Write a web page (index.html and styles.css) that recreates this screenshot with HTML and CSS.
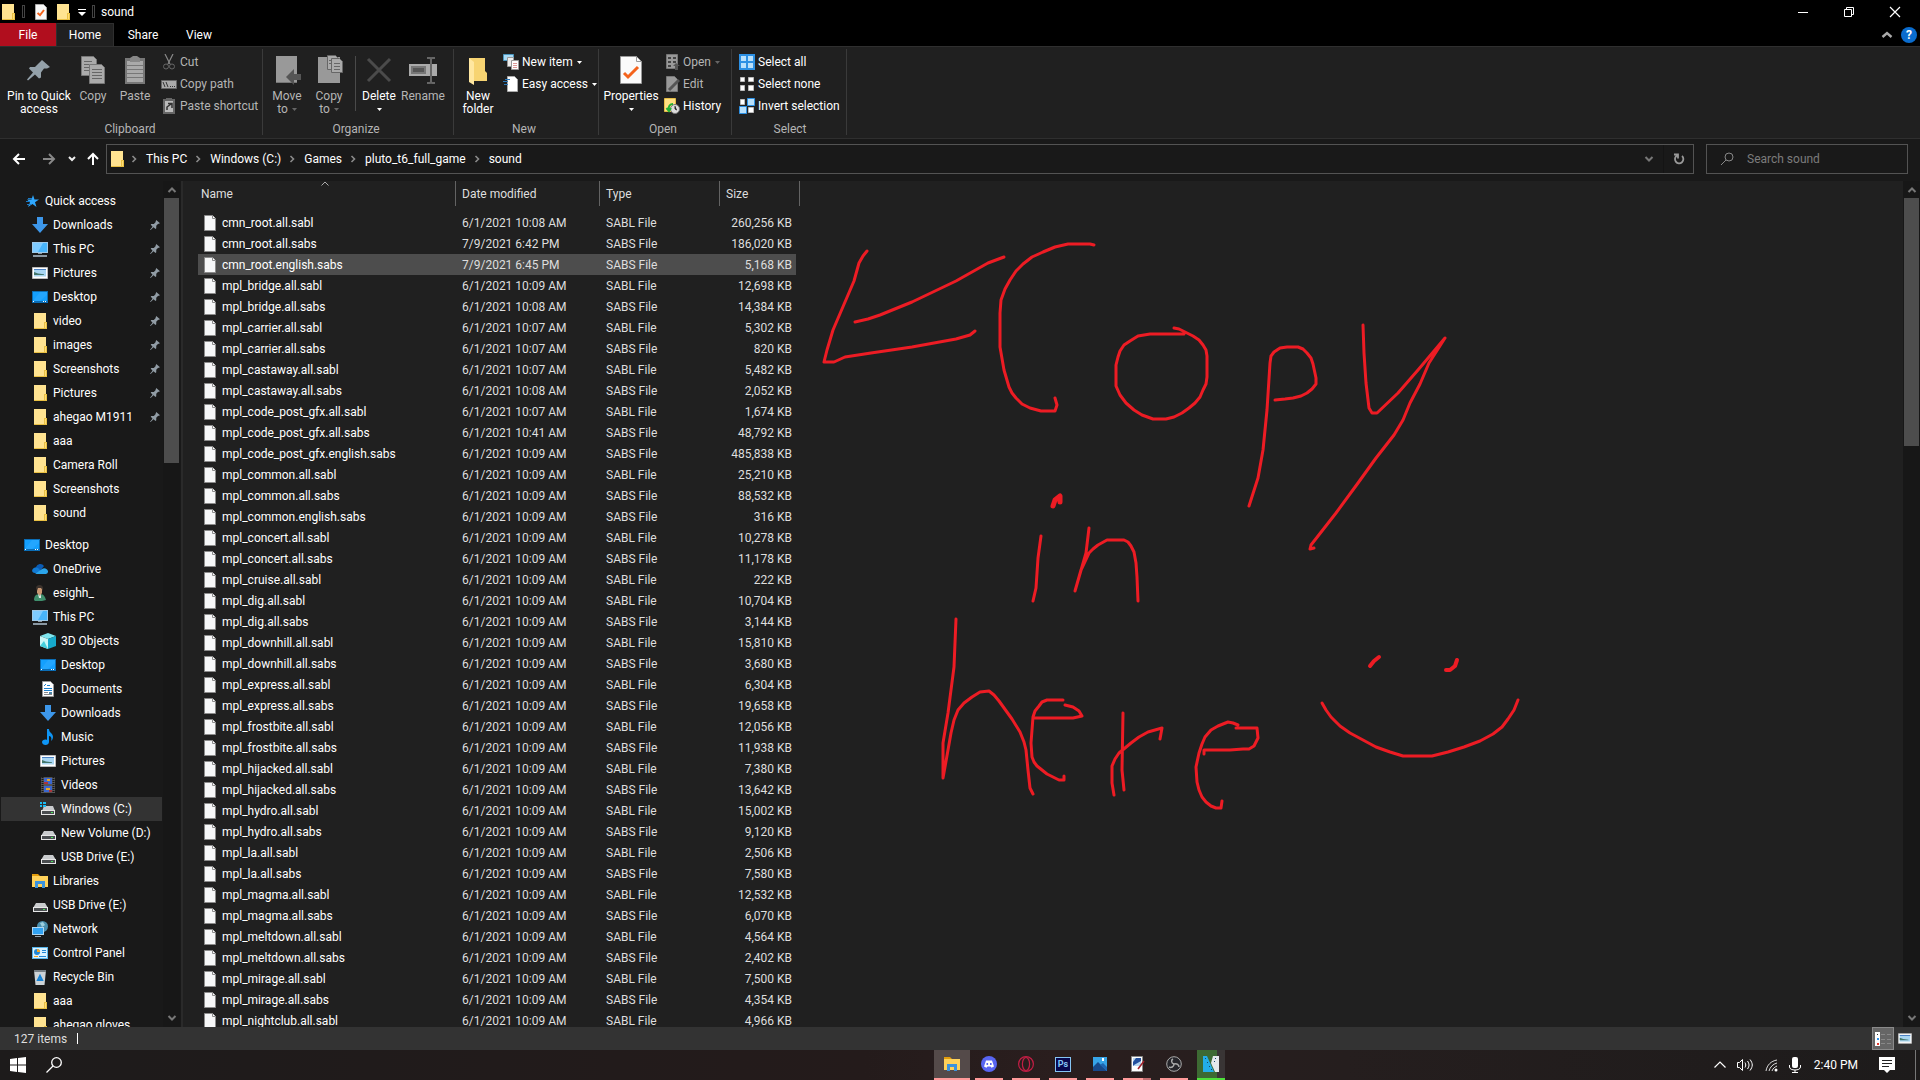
FILE: index.html
```html
<!DOCTYPE html>
<html lang="en">
<head>
  <meta charset="UTF-8">
  <meta name="viewport" content="width=device-width, initial-scale=1.0">
  <title>sound</title>
  <link rel="stylesheet" href="styles.css">
</head>
<body>
  <!-- icons -->
  <svg class="sprite" aria-hidden="true">
    <symbol id="folder" viewBox="0 0 16 16"><path fill="#ffe391" d="M2 0h12v15H2z"/><path fill="#e9c043" d="M2 15h12v1H2zM12 9h3v7h-3z"/><path fill="#ffdc76" d="M13 10h1v5h-1z"/></symbol>
    <symbol id="file" viewBox="0 0 12 16"><path fill="#f6f7f8" stroke="#8b8b8b" d="M.5.5h8l3 3v12H.5z"/><path fill="#fff" stroke="#8b8b8b" d="M8.500.5v3h3"/></symbol>
    <symbol id="prop" viewBox="0 0 12 16"><path fill="#f8f8f8" stroke="#aaa" d="M.5.5h8l3 3v12H.5z"/><path fill="none" stroke="#f4631c" stroke-width="2" d="M2.500 9l2.500 2 4-5"/></symbol>
    <symbol id="pin" viewBox="0 0 12 12"><path fill="#919ca5" d="M7.500 0L12 4l-1.500.6-1 .2-2 2.200v3l-.8.8-2.500-2.200L.8 12l-.8-.3 3-3.500L.8 5.500l.8-.8h3l2-2 .2-1z"/></symbol>
    <symbol id="star" viewBox="0 0 16 16"><path fill="#2fa8ff" d="M9 2l1.500 4.500H15l-4 2.800L12.500 14 8.500 11 4 14l2-4.500L3 6.500h4.500z"/><path stroke="#1c7bc8" d="M4 5.500h4M2 8.500h4M3 11.500h4"/></symbol>
    <symbol id="down" viewBox="0 0 16 16"><path fill="#3d97ea" d="M5 0h6v7h5l-8 9-8-9h5z"/></symbol>
    <symbol id="pc" viewBox="0 0 16 16"><path fill="#9fc9e8" d="M0 1h16v11H0z"/><path fill="#48b4fa" d="M1 2h14v9H1z"/><path fill="#7ecbff" d="M1 2h10L6 11H1z"/><path fill="#8a98a3" d="M6 12h4v1H6zM1 14h14v2H1z"/></symbol>
    <symbol id="pic" viewBox="0 0 16 16"><path fill="#fff" stroke="#bbb" d="M.5 2.500h15v11H.5z"/><path fill="#a9d6f3" d="M2 4h12v8H2z"/><path fill="#4d83c4" d="M2 4h12v1H2z"/><path fill="#44776b" d="M2 7l4 1.500 6 .8V10H2z"/><path fill="#d5e8f1" d="M2 11h12v1H2z"/></symbol>
    <symbol id="desk" viewBox="0 0 16 16"><path fill="#0b6db5" d="M0 2h16v12H0z"/><path fill="#14a0ff" d="M1 3h14v9H1z"/><path fill="#40b2ff" d="M8 3h7v3l-7 6H1z" opacity=".35"/><path fill="#fff" d="M1 12h1v1H1zM11 12h1v1h-1zM13 12h1v1h-1z"/></symbol>
    <symbol id="cloud" viewBox="0 0 16 16"><path fill="#0a5cb5" d="M4 6a4.500 4.500 0 0 1 8-1l-4 5H1z"/><path fill="#1179d2" d="M0 10a4 4 0 0 1 6-3l5 5H3a3 3 0 0 1-3-2z"/><path fill="#2ba5ea" d="M3 13l7-5a4 4 0 0 1 6 2 2.800 2.800 0 0 1-2 3z"/></symbol>
    <symbol id="user" viewBox="0 0 16 16"><path fill="#3f8f6d" d="M2 15c0-4 2-6 6-6s5 3 6 6l-4 1H3z"/><path fill="#c99873" d="M5 3h5v5l-2 3-3-3z"/><path fill="#3c332d" d="M4 3c0-4 7-4 7 0v3L9 3H6L5 6z"/><path fill="#dfe8e4" d="M6 9l2 2 1-2v4H7z"/></symbol>
    <symbol id="cube" viewBox="0 0 16 16"><path fill="#7fe6ee" d="M8 0l8 3-8 3-8-3z"/><path fill="#c9f6f6" d="M0 3l8 3v10l-8-3z"/><path fill="#16a9cb" d="M16 3L8 6v10l8-3z"/><path fill="#45cfdc" d="M0 13l4-5 4 8z"/></symbol>
    <symbol id="doc" viewBox="0 0 16 16"><path fill="#fff" stroke="#999" d="M2.500.5h8l3 3v12h-11z"/><path stroke="#1e80cc" d="M4 7.500h8M4 9.500h8M7 4.500h3M4 5l2-2"/><path stroke="#888" d="M4 11.500h4M4 13.500h8"/><path fill="#4d86a8" d="M9 11h3v2H9z"/></symbol>
    <symbol id="music" viewBox="0 0 16 16"><path fill="#0e95f5" d="M7 0h2c0 4 4 4 4 8 0 2-1 3-2 4 1-3 0-5-2-5v6c0 4-7 4-7 0 0-2 3-3 5-2z"/></symbol>
    <symbol id="video" viewBox="0 0 16 16"><path fill="#555" d="M1 0h14v16H1z"/><path stroke="#161616" stroke-width="2" stroke-dasharray="1 1" d="M2.500 0v16M13.500 0v16"/><path fill="#3a66cf" d="M4 1h8v6H4zM4 9h8v6H4z"/><path fill="#e2a62c" d="M7 2h3v2H7zM6 11h4v2H6z"/><path fill="#a9343b" d="M4 5h4v2H4zM9 13h3v2H9z"/></symbol>
    <symbol id="drive" viewBox="0 0 16 16"><path fill="#c9cbcd" d="M4 6h9l3 5H1z"/><path fill="#e7e7e7" d="M1 10h15v5H1z"/><path fill="#4a4d50" d="M2 11h13v3H2z"/><path fill="#4be25a" d="M11 12h2v1h-2z"/></symbol>
    <symbol id="cdrive" viewBox="0 0 16 16"><path fill="#c9cbcd" d="M4 5h9l2 5H2z"/><path fill="#e7e7e7" d="M1 9h14v5H1z"/><path fill="#4a4d50" d="M2 10h12v3H2z"/><path fill="#4be25a" d="M11 11h2v1h-2z"/><path fill="#1bbcf2" d="M0 1h2v2H0zM3 1h3v2H3zM0 4h2v2H0zM3 4h3v2H3z"/></symbol>
    <symbol id="lib" viewBox="0 0 16 16"><path fill="#e29c0c" d="M0 1h6l2 2H0z"/><path fill="#ffd25a" d="M0 3h16v11H0z"/><path fill="#3c93dd" d="M3 8h10v7h-3v-4H6v4H3z"/></symbol>
    <symbol id="net" viewBox="0 0 16 16"><circle cx="10.500" cy="5.500" r="5.500" fill="#4a8fae"/><path fill="#9dd0df" d="M8 2l3-1 2 3-3 2z"/><path fill="#afd6f0" d="M0 6h12v8H0z"/><path fill="#31a2f2" d="M1 7h10v6H1z"/><path fill="#93a2ad" d="M3 15h6v1H3z"/></symbol>
    <symbol id="ctrl" viewBox="0 0 16 16"><path fill="#58b5ea" d="M0 2h16v12H0z"/><path fill="#d9f1ff" d="M1 3h14v10H1z"/><circle cx="5" cy="7" r="3" fill="#2187d5"/><path fill="#f5a623" d="M5 4a3 3 0 0 1 3 3H5zM2 11h4v1H2z"/><path stroke="#2187d5" d="M10 5.500h4M10 7.500h4M7 11.500h7"/></symbol>
    <symbol id="bin" viewBox="0 0 16 16"><path fill="#cdd3d7" d="M2 1h12l-1.500 15h-9z"/><path fill="#777f85" d="M2 1h12v2H2z"/><path fill="none" stroke="#1683d6" stroke-width="2" d="M6 11l2-4 2 4z"/></symbol>
    <symbol id="chev" viewBox="0 0 8 8"><path fill="none" stroke="#8a8a8a" stroke-width="1.600" d="M2.500 1l3 3-3 3"/></symbol>
    <symbol id="up" viewBox="0 0 10 10"><path fill="none" stroke="#777" stroke-width="2" d="M1.500 7L5 3.500 8.500 7"/></symbol>
    <symbol id="dn" viewBox="0 0 10 10"><path fill="none" stroke="#777" stroke-width="2" d="M1.500 3L5 6.500 8.500 3"/></symbol>
    <symbol id="tri" viewBox="0 0 5 3"><path fill="currentColor" d="M0 0h5L2.500 3z"/></symbol>
  </svg>

  <div class="window">
    <header class="titlebar">
      <svg class="i16"><use href="#folder"/></svg>
      <span class="grip"></span>
      <button class="quick" aria-label="Properties"><svg class="i-file"><use href="#prop"/></svg></button>
      <button class="quick" aria-label="New folder"><svg class="i16"><use href="#folder"/></svg></button>
      <button class="quick-more" aria-label="Customize toolbar"><svg width="8" height="8"><path fill="#fff" d="M0 1h8v1H0zM0 4h8L4 8z"/></svg></button>
      <span class="grip"></span>
      <span class="title">sound</span>
      <div class="controls">
        <button aria-label="Minimize"><svg width="12" height="12"><path stroke="#fff" d="M1 6.500h10"/></svg></button>
        <button aria-label="Restore"><svg width="12" height="12"><path fill="none" stroke="#fff" d="M1.500 3.500h7v7h-7zM3.500 3V1.500h7v7H9"/></svg></button>
        <button aria-label="Close"><svg width="12" height="12"><path stroke="#fff" stroke-width="1.200" d="M1 1l10 10M11 1L1 11"/></svg></button>
      </div>
    </header>

    <nav class="tabs">
      <button class="tab tab-file">File</button>
      <button class="tab tab-active">Home</button>
      <button class="tab">Share</button>
      <button class="tab tab-view">View</button>
      <div class="tab-tools">
        <button aria-label="Collapse ribbon"><svg width="12" height="12"><path fill="none" stroke="#aaa" stroke-width="2.400" d="M1.500 8L6 4l4.500 4"/></svg></button>
        <button class="help" aria-label="Help">?</button>
      </div>
    </nav>

    <section class="ribbon">
      <div class="group g-clipboard">
        <div class="group-body">
          <button class="big w74"><svg width="24" height="30" viewBox="0 0 24 30"><path fill="#94a1aa" d="M15 5l8 7-3 1.500h-3l-3 4v5l-2 1-4-4-7 6-1-1 6-7-4-4 1-1.500h5l4-4z"/></svg><span>Pin to Quick<br>access</span></button>
          <button class="big w34" disabled><svg width="26" height="30" viewBox="0 0 26 30"><g fill="#aaa" stroke="#777"><path d="M1.500 1.500h12l3 3v16h-15z"/><path d="M9.500 9.500h12l3 3v16h-15z"/></g><path stroke="#666" d="M4 6.500h8M4 9.500h5M4 12.500h5M4 15.500h5M12 14.500h10M12 17.500h10M12 20.500h10M12 23.500h10"/></svg><span>Copy</span></button>
          <button class="big w50" disabled><svg width="24" height="30" viewBox="0 0 24 30"><path fill="#777" d="M2 3h20v26H2z"/><path fill="#aaa" d="M4 6h16v21H4z"/><path fill="#888" d="M7 3l3-2h4l3 2v4H7z"/><path stroke="#777" d="M4 10.500h16M4 14.500h16M4 18.500h16M4 22.500h16"/></svg><span>Paste</span></button>
          <div class="stack">
            <button class="small" disabled><svg class="i16"><path fill="none" stroke="#888" stroke-width="1.200" d="M4 0l5 10M12 0L7 10"/><circle cx="5" cy="12.500" r="2.500" fill="none" stroke="#666"/><circle cx="11" cy="12.500" r="2.500" fill="none" stroke="#666"/></svg>Cut</button>
            <button class="small" disabled><svg class="i16"><path fill="#aaa" stroke="#666" d="M.5 4.500h15v8H.5z"/><path stroke="#333" d="M2 6l2 5M5 6l2 5M9 10.500h1M11 10.500h1M13 10.500h1"/></svg>Copy path</button>
            <button class="small" disabled><svg class="i16"><path fill="#666" d="M2 1h12v15H2zM5 0h6v2H5z"/><path fill="#bbb" d="M4 3h8v11H4z"/><path fill="none" stroke="#333" stroke-width="1.500" d="M6 12V9l4-3M7 5.500h4V10"/></svg>Paste shortcut</button>
          </div>
        </div>
        <div class="group-name">Clipboard</div>
      </div>
      <div class="group g-organize">
        <div class="group-body">
          <button class="big w48" disabled><svg width="28" height="30" viewBox="0 0 28 30"><path fill="#999" d="M3 1h21v27H3z"/><path fill="#777" d="M3 27h21v1H3z"/><path fill="#555" d="M13 22l8-8v5h7v6h-7v5z"/></svg><span>Move<br>to <svg class="tri"><use href="#tri"/></svg></span></button>
          <button class="big w36" disabled><svg width="28" height="30" viewBox="0 0 28 30"><path fill="#999" d="M3 2h22v26H3z"/><g fill="#aaa" stroke="#666"><path d="M12.500.5h8l2 2v12h-10z"/><path d="M16.500 3.500h8l3 3v11h-11z"/></g><path stroke="#666" d="M19 8.500h6M19 11.500h6M19 14.500h6M14 5.500h2M14 8.500h2"/></svg><span>Copy<br>to <svg class="tri"><use href="#tri"/></svg></span></button>
          <span class="inner-line"></span>
          <button class="big w46"><svg width="26" height="30" viewBox="0 0 26 30"><path stroke="#4b4b4b" stroke-width="3" d="M2 4l22 22M24 4L2 26"/></svg><span>Delete<br><svg class="tri"><use href="#tri"/></svg></span></button>
          <button class="big w42" disabled><svg width="28" height="30" viewBox="0 0 28 30"><path fill="#aaa" d="M0 9h28v12H0z"/><path fill="#555" stroke="#777" stroke-width="2" d="M3 12h13v6H3z"/><path fill="none" stroke="#666" stroke-width="2" d="M18 3h3l1 1 1-1h3M22 4v23M18 28h3l1-1 1 1h3"/></svg><span>Rename</span></button>
        </div>
        <div class="group-name">Organize</div>
      </div>
      <div class="group g-new">
        <div class="group-body">
          <button class="big w48"><svg width="20" height="30" viewBox="0 0 20 30"><path fill="#f7d472" d="M1 3h16v13l2 2v8H4z"/><path fill="#ffe7a0" d="M1 3l5 4v23l-5-3z"/></svg><span>New<br>folder</span></button>
          <div class="stack">
            <button class="small"><svg class="i16"><path fill="#a9daf5" stroke="#4b95bd" d="M.5.5h10v6H.5z"/><path fill="#eee" stroke="#999" d="M4.500 3.500h6v9h-6z"/><path fill="#fff" stroke="#999" d="M8.500 6.500h7v9h-7z"/><path stroke="#d99" d="M10 9.500h4M10 11.500h4M10 13.500h4"/></svg>New item<svg class="tri"><use href="#tri"/></svg></button>
            <button class="small"><svg class="i16"><path fill="#fff" stroke="#aaa" d="M4.500.5h7l3 3v12h-10z"/><path stroke="#2b78b8" d="M2 3.500h5M0 5.500h5M1 8.500h4"/></svg>Easy access<svg class="tri"><use href="#tri"/></svg></button>
          </div>
        </div>
        <div class="group-name">New</div>
      </div>
      <div class="group g-open">
        <div class="group-body">
          <button class="big w64"><svg width="22" height="30" viewBox="0 0 22 30"><path fill="#fafafa" stroke="#999" d="M.5 1.500h16l5 5v22H.5z"/><path fill="none" stroke="#999" d="M16.500 1.500v5h5"/><path fill="none" stroke="#f4631c" stroke-width="3" d="M4 18l4 4 10-10"/></svg><span>Properties<br><svg class="tri"><use href="#tri"/></svg></span></button>
          <div class="stack">
            <button class="small" disabled><svg class="i16"><path fill="#999" stroke="#777" d="M2.500.5h11v14h-11z"/><path stroke="#444" stroke-width="2" d="M4 4h3M4 8h3M4 12h3M9 4h3M9 8h3"/><path fill="#555" d="M9 12l3-3 4 3h-2v4h-3v-4z"/></svg>Open<svg class="tri"><use href="#tri"/></svg></button>
            <button class="small" disabled><svg class="i16"><path fill="#999" stroke="#777" d="M2.500.5h8l3 3v12h-11z"/><path stroke="#555" stroke-width="3" d="M5 14L15 4"/></svg>Edit</button>
            <button class="small"><svg class="i16"><path fill="#ffe082" stroke="#e5bd45" d="M.5.5h11v13H.5z"/><circle cx="11" cy="11" r="4.500" fill="#ddd" stroke="#777"/><path stroke="#333" d="M11 8v3l2 1"/><path fill="none" stroke="#22b033" stroke-width="2" d="M9 6c-3 0-5 2-4 6M2.500 10L5 13l2-3"/></svg>History</button>
          </div>
        </div>
        <div class="group-name">Open</div>
      </div>
      <div class="group g-select">
        <div class="group-body">
          <div class="stack">
            <button class="small"><svg class="i16"><path fill="#2c90e4" d="M0 0h16v16H0z"/><path fill="#b9e0fb" d="M2 2h5v5H2zM9 2h5v5H9zM2 9h5v5H2zM9 9h5v5H9z"/></svg>Select all</button>
            <button class="small"><svg class="i16"><path fill="#fff" stroke="#bbb" d="M1.500 1.500h4v4h-4zM9.500 1.500h5v4h-5zM1.500 9.500h4v5h-4zM9.500 9.500h5v5h-5z"/></svg>Select none</button>
            <button class="small"><svg class="i16"><path fill="#fff" stroke="#bbb" d="M1.500 1.500h4v5h-4zM9.500 9.500h5v5h-5z"/><path fill="#b9e0fb" stroke="#2c90e4" d="M8.500.5h7v7h-7zM.5 8.500h7v7h-7z"/></svg>Invert selection</button>
          </div>
        </div>
        <div class="group-name">Select</div>
      </div>
    </section>

    <section class="addressbar">
      <button class="nav-btn" aria-label="Back"><svg width="14" height="14"><path fill="none" stroke="#fff" stroke-width="2" d="M13 7H2M7 2L2 7l5 5"/></svg></button>
      <button class="nav-btn" aria-label="Forward"><svg width="14" height="14"><path fill="none" stroke="#888" stroke-width="2" d="M1 7h11M7 2l5 5-5 5"/></svg></button>
      <button class="nav-btn nav-small" aria-label="Recent locations"><svg width="8" height="8"><path fill="none" stroke="#eee" stroke-width="2" d="M1 2l3 3 3-3"/></svg></button>
      <button class="nav-btn nav-up" aria-label="Up"><svg width="14" height="14"><path fill="none" stroke="#fff" stroke-width="2" d="M7 13V2M2 7l5-5 5 5"/></svg></button>
      <div class="path">
        <svg class="i16 path-icon"><use href="#folder"/></svg>
        <svg class="chev"><use href="#chev"/></svg><a href="#">This PC</a>
        <svg class="chev"><use href="#chev"/></svg><a href="#">Windows (C:)</a>
        <svg class="chev"><use href="#chev"/></svg><a href="#">Games</a>
        <svg class="chev"><use href="#chev"/></svg><a href="#">pluto_t6_full_game</a>
        <svg class="chev"><use href="#chev"/></svg><a href="#">sound</a>
        <button class="path-drop" aria-label="Previous locations"><svg class="i10"><use href="#dn"/></svg></button>
        <button class="path-refresh" aria-label="Refresh"><svg width="12" height="12"><path fill="none" stroke="#999" stroke-width="1.800" d="M4 2.500a4.200 4.200 0 1 0 5 .5M1 1.500h4v4"/></svg></button>
      </div>
      <label class="search">
        <svg width="14" height="14"><circle cx="9" cy="5" r="4" fill="none" stroke="#888"/><path stroke="#888" d="M6 8l-5 5"/></svg>
        <input type="text" placeholder="Search sound" aria-label="Search sound">
      </label>
    </section>

    <main class="content">
      <aside class="sidebar">
        <ul class="tree">
          <li><svg class="i16"><use href="#star"/></svg>Quick access</li>
          <li class="l2"><svg class="i16"><use href="#down"/></svg>Downloads<svg class="pin"><use href="#pin"/></svg></li>
          <li class="l2"><svg class="i16"><use href="#pc"/></svg>This PC<svg class="pin"><use href="#pin"/></svg></li>
          <li class="l2"><svg class="i16"><use href="#pic"/></svg>Pictures<svg class="pin"><use href="#pin"/></svg></li>
          <li class="l2"><svg class="i16"><use href="#desk"/></svg>Desktop<svg class="pin"><use href="#pin"/></svg></li>
          <li class="l2"><svg class="i16"><use href="#folder"/></svg>video<svg class="pin"><use href="#pin"/></svg></li>
          <li class="l2"><svg class="i16"><use href="#folder"/></svg>images<svg class="pin"><use href="#pin"/></svg></li>
          <li class="l2"><svg class="i16"><use href="#folder"/></svg>Screenshots<svg class="pin"><use href="#pin"/></svg></li>
          <li class="l2"><svg class="i16"><use href="#folder"/></svg>Pictures<svg class="pin"><use href="#pin"/></svg></li>
          <li class="l2"><svg class="i16"><use href="#folder"/></svg>ahegao M1911<svg class="pin"><use href="#pin"/></svg></li>
          <li class="l2"><svg class="i16"><use href="#folder"/></svg>aaa</li>
          <li class="l2"><svg class="i16"><use href="#folder"/></svg>Camera Roll</li>
          <li class="l2"><svg class="i16"><use href="#folder"/></svg>Screenshots</li>
          <li class="l2"><svg class="i16"><use href="#folder"/></svg>sound</li>
        </ul>
        <ul class="tree">
          <li><svg class="i16"><use href="#desk"/></svg>Desktop</li>
          <li class="l2"><svg class="i16"><use href="#cloud"/></svg>OneDrive</li>
          <li class="l2"><svg class="i16"><use href="#user"/></svg>esighh_</li>
          <li class="l2"><svg class="i16"><use href="#pc"/></svg>This PC</li>
          <li class="l3"><svg class="i16"><use href="#cube"/></svg>3D Objects</li>
          <li class="l3"><svg class="i16"><use href="#desk"/></svg>Desktop</li>
          <li class="l3"><svg class="i16"><use href="#doc"/></svg>Documents</li>
          <li class="l3"><svg class="i16"><use href="#down"/></svg>Downloads</li>
          <li class="l3"><svg class="i16"><use href="#music"/></svg>Music</li>
          <li class="l3"><svg class="i16"><use href="#pic"/></svg>Pictures</li>
          <li class="l3"><svg class="i16"><use href="#video"/></svg>Videos</li>
          <li class="l3 selected"><svg class="i16"><use href="#cdrive"/></svg>Windows (C:)</li>
          <li class="l3"><svg class="i16"><use href="#drive"/></svg>New Volume (D:)</li>
          <li class="l3"><svg class="i16"><use href="#drive"/></svg>USB Drive (E:)</li>
          <li class="l2"><svg class="i16"><use href="#lib"/></svg>Libraries</li>
          <li class="l2"><svg class="i16"><use href="#drive"/></svg>USB Drive (E:)</li>
          <li class="l2"><svg class="i16"><use href="#net"/></svg>Network</li>
          <li class="l2"><svg class="i16"><use href="#ctrl"/></svg>Control Panel</li>
          <li class="l2"><svg class="i16"><use href="#bin"/></svg>Recycle Bin</li>
          <li class="l2"><svg class="i16"><use href="#folder"/></svg>aaa</li>
          <li class="l2"><svg class="i16"><use href="#folder"/></svg>ahegao gloves</li>
        </ul>
      </aside>
      <div class="scroll">
        <svg class="i10"><use href="#up"/></svg>
        <div class="thumb thumb-tree"></div>
        <svg class="i10 scroll-end"><use href="#dn"/></svg>
      </div>

      <div class="files">
        <table>
          <thead>
            <tr><th class="c-name">Name<svg class="sort" width="8" height="5"><path fill="none" stroke="#aaa" d="M.5 4.500L4 1l3.500 3.500"/></svg></th><th class="c-date">Date modified</th><th class="c-type">Type</th><th class="c-size">Size</th></tr>
          </thead>
          <tbody>
            <tr><td><svg class="i-file"><use href="#file"/></svg>cmn_root.all.sabl</td><td>6/1/2021 10:08 AM</td><td>SABL File</td><td>260,256 KB</td></tr>
            <tr><td><svg class="i-file"><use href="#file"/></svg>cmn_root.all.sabs</td><td>7/9/2021 6:42 PM</td><td>SABS File</td><td>186,020 KB</td></tr>
            <tr class="hover"><td><svg class="i-file"><use href="#file"/></svg>cmn_root.english.sabs</td><td>7/9/2021 6:45 PM</td><td>SABS File</td><td>5,168 KB</td></tr>
            <tr><td><svg class="i-file"><use href="#file"/></svg>mpl_bridge.all.sabl</td><td>6/1/2021 10:09 AM</td><td>SABL File</td><td>12,698 KB</td></tr>
            <tr><td><svg class="i-file"><use href="#file"/></svg>mpl_bridge.all.sabs</td><td>6/1/2021 10:08 AM</td><td>SABS File</td><td>14,384 KB</td></tr>
            <tr><td><svg class="i-file"><use href="#file"/></svg>mpl_carrier.all.sabl</td><td>6/1/2021 10:07 AM</td><td>SABL File</td><td>5,302 KB</td></tr>
            <tr><td><svg class="i-file"><use href="#file"/></svg>mpl_carrier.all.sabs</td><td>6/1/2021 10:07 AM</td><td>SABS File</td><td>820 KB</td></tr>
            <tr><td><svg class="i-file"><use href="#file"/></svg>mpl_castaway.all.sabl</td><td>6/1/2021 10:07 AM</td><td>SABL File</td><td>5,482 KB</td></tr>
            <tr><td><svg class="i-file"><use href="#file"/></svg>mpl_castaway.all.sabs</td><td>6/1/2021 10:08 AM</td><td>SABS File</td><td>2,052 KB</td></tr>
            <tr><td><svg class="i-file"><use href="#file"/></svg>mpl_code_post_gfx.all.sabl</td><td>6/1/2021 10:07 AM</td><td>SABL File</td><td>1,674 KB</td></tr>
            <tr><td><svg class="i-file"><use href="#file"/></svg>mpl_code_post_gfx.all.sabs</td><td>6/1/2021 10:41 AM</td><td>SABS File</td><td>48,792 KB</td></tr>
            <tr><td><svg class="i-file"><use href="#file"/></svg>mpl_code_post_gfx.english.sabs</td><td>6/1/2021 10:09 AM</td><td>SABS File</td><td>485,838 KB</td></tr>
            <tr><td><svg class="i-file"><use href="#file"/></svg>mpl_common.all.sabl</td><td>6/1/2021 10:09 AM</td><td>SABL File</td><td>25,210 KB</td></tr>
            <tr><td><svg class="i-file"><use href="#file"/></svg>mpl_common.all.sabs</td><td>6/1/2021 10:09 AM</td><td>SABS File</td><td>88,532 KB</td></tr>
            <tr><td><svg class="i-file"><use href="#file"/></svg>mpl_common.english.sabs</td><td>6/1/2021 10:09 AM</td><td>SABS File</td><td>316 KB</td></tr>
            <tr><td><svg class="i-file"><use href="#file"/></svg>mpl_concert.all.sabl</td><td>6/1/2021 10:09 AM</td><td>SABL File</td><td>10,278 KB</td></tr>
            <tr><td><svg class="i-file"><use href="#file"/></svg>mpl_concert.all.sabs</td><td>6/1/2021 10:09 AM</td><td>SABS File</td><td>11,178 KB</td></tr>
            <tr><td><svg class="i-file"><use href="#file"/></svg>mpl_cruise.all.sabl</td><td>6/1/2021 10:09 AM</td><td>SABL File</td><td>222 KB</td></tr>
            <tr><td><svg class="i-file"><use href="#file"/></svg>mpl_dig.all.sabl</td><td>6/1/2021 10:09 AM</td><td>SABL File</td><td>10,704 KB</td></tr>
            <tr><td><svg class="i-file"><use href="#file"/></svg>mpl_dig.all.sabs</td><td>6/1/2021 10:09 AM</td><td>SABS File</td><td>3,144 KB</td></tr>
            <tr><td><svg class="i-file"><use href="#file"/></svg>mpl_downhill.all.sabl</td><td>6/1/2021 10:09 AM</td><td>SABL File</td><td>15,810 KB</td></tr>
            <tr><td><svg class="i-file"><use href="#file"/></svg>mpl_downhill.all.sabs</td><td>6/1/2021 10:09 AM</td><td>SABS File</td><td>3,680 KB</td></tr>
            <tr><td><svg class="i-file"><use href="#file"/></svg>mpl_express.all.sabl</td><td>6/1/2021 10:09 AM</td><td>SABL File</td><td>6,304 KB</td></tr>
            <tr><td><svg class="i-file"><use href="#file"/></svg>mpl_express.all.sabs</td><td>6/1/2021 10:09 AM</td><td>SABS File</td><td>19,658 KB</td></tr>
            <tr><td><svg class="i-file"><use href="#file"/></svg>mpl_frostbite.all.sabl</td><td>6/1/2021 10:09 AM</td><td>SABL File</td><td>12,056 KB</td></tr>
            <tr><td><svg class="i-file"><use href="#file"/></svg>mpl_frostbite.all.sabs</td><td>6/1/2021 10:09 AM</td><td>SABS File</td><td>11,938 KB</td></tr>
            <tr><td><svg class="i-file"><use href="#file"/></svg>mpl_hijacked.all.sabl</td><td>6/1/2021 10:09 AM</td><td>SABL File</td><td>7,380 KB</td></tr>
            <tr><td><svg class="i-file"><use href="#file"/></svg>mpl_hijacked.all.sabs</td><td>6/1/2021 10:09 AM</td><td>SABS File</td><td>13,642 KB</td></tr>
            <tr><td><svg class="i-file"><use href="#file"/></svg>mpl_hydro.all.sabl</td><td>6/1/2021 10:09 AM</td><td>SABL File</td><td>15,002 KB</td></tr>
            <tr><td><svg class="i-file"><use href="#file"/></svg>mpl_hydro.all.sabs</td><td>6/1/2021 10:09 AM</td><td>SABS File</td><td>9,120 KB</td></tr>
            <tr><td><svg class="i-file"><use href="#file"/></svg>mpl_la.all.sabl</td><td>6/1/2021 10:09 AM</td><td>SABL File</td><td>2,506 KB</td></tr>
            <tr><td><svg class="i-file"><use href="#file"/></svg>mpl_la.all.sabs</td><td>6/1/2021 10:09 AM</td><td>SABS File</td><td>7,580 KB</td></tr>
            <tr><td><svg class="i-file"><use href="#file"/></svg>mpl_magma.all.sabl</td><td>6/1/2021 10:09 AM</td><td>SABL File</td><td>12,532 KB</td></tr>
            <tr><td><svg class="i-file"><use href="#file"/></svg>mpl_magma.all.sabs</td><td>6/1/2021 10:09 AM</td><td>SABS File</td><td>6,070 KB</td></tr>
            <tr><td><svg class="i-file"><use href="#file"/></svg>mpl_meltdown.all.sabl</td><td>6/1/2021 10:09 AM</td><td>SABL File</td><td>4,564 KB</td></tr>
            <tr><td><svg class="i-file"><use href="#file"/></svg>mpl_meltdown.all.sabs</td><td>6/1/2021 10:09 AM</td><td>SABS File</td><td>2,402 KB</td></tr>
            <tr><td><svg class="i-file"><use href="#file"/></svg>mpl_mirage.all.sabl</td><td>6/1/2021 10:09 AM</td><td>SABL File</td><td>7,500 KB</td></tr>
            <tr><td><svg class="i-file"><use href="#file"/></svg>mpl_mirage.all.sabs</td><td>6/1/2021 10:09 AM</td><td>SABS File</td><td>4,354 KB</td></tr>
            <tr><td><svg class="i-file"><use href="#file"/></svg>mpl_nightclub.all.sabl</td><td>6/1/2021 10:09 AM</td><td>SABL File</td><td>4,966 KB</td></tr>
          </tbody>
        </table>

        <!-- hand drawn note -->
        <svg class="note" width="720" height="600" viewBox="810 231 720 600">
          <!-- arrow -->
          <path d="M867 251L863 256 859 263 854 281 845 302 833 330 827 350 824 362H834L845 357 871 353 912 347 956 339 970 335 975 331"/>
          <path d="M1004 257L988 263 956 281 912 302 880 315 868 319 855 322"/>
          <!-- copy -->
          <path d="M1094 245L1090 244H1068L1055 247 1043 252 1032 257 1023 264 1016 271 1010 280 1005 289 1001 300 1000 313V347L1004 370 1009 387 1012 393 1016 398 1022 404 1030 408 1041 411H1055L1057 405 1055 398"/>
          <path d="M1174 328L1179 329 1193 336 1199 340 1203 345 1206 350 1207 356V377L1206 384 1203 390 1200 397 1195 403 1189 408 1182 413 1174 417 1166 419H1153L1142 415 1134 410 1126 403 1120 395 1116 386V365L1118 357 1120 351 1124 345 1130 341 1138 336 1150 334H1184"/>
          <path d="M1249 506L1258 478 1263 450 1267 410 1270 363 1271 356 1274 352 1280 348 1287 347H1298L1303 349 1307 353 1311 358 1313 364 1316 378V384L1312 389 1307 393 1301 396 1293 398 1285 399 1275 400"/>
          <path d="M1363 325L1364 353 1366 383 1369 408 1372 413H1377L1398 393 1418 370 1445 338 1438 349 1429 363 1420 384 1410 403 1403 420 1394 435 1376 458 1358 483 1336 513 1311 545 1310 549 1314 548"/>
          <!-- in -->
          <path class="dot" d="M1053 506L1055 500 1060 496V502"/>
          <path d="M1041 536L1038 558 1036 588 1033 601"/>
          <path d="M1089 528L1086 553 1075 591 1081 570 1089 553 1093 549 1098 545 1107 540H1124L1128 542 1131 546 1134 552 1136 563 1137 577 1138 601"/>
          <!-- here -->
          <path d="M956 619L954 667 948 713 943 743V778L945 767 951 733 954 720 958 710 964 703 972 697 980 692 989 691 994 695 999 701 1012 719 1020 732 1024 742 1026 750 1028 770 1030 788 1033 794"/>
          <path d="M1063 700H1047L1042 702 1039 706 1035 711 1033 717 1031 743 1032 757 1034 762 1037 766 1047 774 1059 780H1064V776M1065 705L1073 707 1079 711 1082 716 1073 718H1033"/>
          <path d="M1123 713L1122 770 1124 790M1160 739L1162 728 1148 732 1139 737 1131 743 1119 753 1115 759 1112 766V783L1114 795"/>
          <path d="M1238 725L1233 723 1228 722 1218 726 1211 730 1205 737 1202 744 1199 753 1196 767 1197 782 1199 790 1202 797 1206 802 1211 806 1216 808H1221L1222 801M1236 728H1257L1258 738 1254 746 1249 749 1243 749 1230 750H1204V754"/>
          <!-- smile -->
          <path class="eye" d="M1370 666L1374 661 1379 657"/>
          <path class="eye" d="M1446 670H1450L1455 666 1457 660"/>
          <path d="M1322 703L1326 710 1331 717 1340 726 1350 733 1376 747 1390 752 1403 756H1432L1448 752 1464 747 1480 741 1493 734 1502 727 1508 719 1514 710 1518 700"/>
        </svg>
      </div>
      <div class="scroll">
        <svg class="i10"><use href="#up"/></svg>
        <div class="thumb thumb-files"></div>
        <svg class="i10 scroll-end"><use href="#dn"/></svg>
      </div>
    </main>

    <footer class="statusbar">
      <span>127 items</span><span class="status-line"></span>
      <button class="view-btn view-on" aria-label="Details view"><svg width="18" height="14"><path fill="#fff" d="M1 0h5v14H1z"/><path fill="#333" d="M3 2h1v1H3z"/><path fill="#3293e8" d="M3 6h2v2H3z"/><path fill="#e2382c" d="M3 11h2v2H3z"/><path stroke="#888" d="M7 2.500h4M13 2.500h4M7 7.500h4M13 7.500h4M7 11.500h4M13 11.500h4"/></svg></button>
      <button class="view-btn" aria-label="Thumbnail view"><svg class="i-view" viewBox="0 2 16 12"><use href="#pic" width="16" height="16"/></svg></button>
    </footer>
  </div>

  <div class="taskbar">
    <button class="start" aria-label="Start"><svg class="i16"><path fill="#fff" d="M0 2l7-1v6.500H0zM8 1l8-1v7.500H8zM0 8.500h7V15l-7-1zM8 8.500h8V16l-8-1z"/></svg></button>
    <button class="find" aria-label="Search"><svg class="i16"><circle cx="10.500" cy="5.500" r="4.800" fill="none" stroke="#fff" stroke-width="1.300"/><path stroke="#fff" stroke-width="1.300" d="M7 9l-6.500 6.500"/></svg></button>
    <div class="apps">
      <button class="app app-current" aria-label="File Explorer"><svg class="i16"><use href="#lib"/></svg></button>
      <button class="app" aria-label="Discord"><svg class="i16"><circle cx="8" cy="8" r="8" fill="#5865f2"/><path fill="#fff" d="M5 4.500h6l2 6-2.500 1.200-1-1.200h-3l-1 1.200L3 10.500z"/><path fill="#5865f2" d="M5.500 7h1.600v2H5.500zM9 7h1.600v2H9z"/></svg></button>
      <button class="app" aria-label="Opera GX"><svg class="i16"><g fill="none" stroke="#c41e45" stroke-width="1.200"><circle cx="8" cy="8" r="7.400"/><ellipse cx="8" cy="8" rx="3.600" ry="6.500"/></g></svg></button>
      <button class="app" aria-label="Photoshop"><span class="ps">Ps</span></button>
      <button class="app" aria-label="Photos"><svg class="i16"><path fill="#37a4e8" d="M1 1h14v14H1z"/><path fill="#17498b" d="M1 11l5-5 9 9H1z"/><path fill="#1f66b2" d="M8 9l3-2 4 4v4z"/><path fill="#fff" d="M10 2h2v3h-2z"/></svg></button>
      <button class="app app-multi" aria-label="Paint"><svg class="i16"><path fill="#fff" stroke="#888" d="M2.500.5h11v15h-11z"/><path fill="#224f9d" d="M4 2h8v8H4z"/><path fill="#b8d8f3" d="M4 2h3L4 6zM5 9l7-4v5H4z"/><path stroke="#a2232d" stroke-width="1.500" d="M9 13l6-8"/></svg></button>
      <button class="app" aria-label="OBS"><svg class="i16"><circle cx="8" cy="8" r="7.300" fill="#26262b" stroke="#aaa"/><path fill="none" stroke="#aaa" stroke-width="1.500" d="M8 8C5 7 5 4 7 3M8 8c3-1 5 1 5 3M8 8c0 3-3 4-5 3"/></svg></button>
      <button class="app app-green" aria-label="Vegas"><svg class="i16"><path fill="#23aee9" d="M0 0h4l7 16H0z"/><path fill="#e4e8eb" d="M10 0h6v16h-4L8 7z"/><path fill="#18476a" d="M2 2h1v1H2zM4 6h1v1H4zM6 10h1v1H6zM8 13h1v1H8zM12 2h1v1h-1zM11 5h1v1h-1z"/></svg></button>
    </div>
    <div class="tray">
      <svg width="12" height="12"><path fill="none" stroke="#fff" stroke-width="1.200" d="M.5 8.500L6 3l5.500 5.500"/></svg>
      <svg width="17" height="14"><path fill="none" stroke="#fff" d="M.5 4.500h2l3-3v11l-3-3h-2zM8 4.500c1 2 1 3 0 5M10.500 3c2 3 2 5 0 8M13 1.500c3 4 3 7 0 11"/></svg>
      <svg width="13" height="13"><path fill="none" stroke="#ddd" d="M1 12C2 6 6 2 12 1M4 12c1-4 4-7 8-8M7 12c1-3 3-4 5-5"/><circle cx="11" cy="11" r="1.500" fill="#fff"/></svg>
      <svg width="12" height="16"><rect x="3" width="6" height="11" rx="2" fill="#fff"/><path fill="none" stroke="#fff" d="M.5 8v2c0 4 11 4 11 0V8M6 13v2M3 15.500h6"/></svg>
      <time>2:40 PM</time>
      <svg width="16" height="16"><path fill="#fff" d="M0 0h16v13h-5l-3 3-3-3H0z"/><path stroke="#222" d="M3 3.500h10M3 6.500h10M3 9.500h7"/></svg>
      <span class="show-desktop"></span>
    </div>
  </div>
</body>
</html>
```
FILE: styles.css
```css
* {
  box-sizing: border-box;
}

body {
  margin: 0;
  height: 100vh;
  display: flex;
  flex-direction: column;
  overflow: hidden;
  background: #191919;
  color: #fff;
  font-family: "Segoe UI", Roboto, "Open Sans", sans-serif;
  font-size: 12px;
  line-height: 16px;
}

button {
  padding: 0;
  border: 0;
  background: none;
  color: inherit;
  font: inherit;
}

a {
  color: #fff;
  text-decoration: none;
}

svg {
  display: block;
  flex: none;
}

.sprite {
  position: absolute;
  width: 0;
  height: 0;
}

.i16 {
  width: 16px;
  height: 16px;
}

.i10 {
  width: 10px;
  height: 10px;
}

.i-file {
  width: 12px;
  height: 16px;
}

.i-view {
  width: 14px;
  height: 11px;
}

.window {
  flex: 1;
  min-height: 0;
  display: flex;
  flex-direction: column;
}

/* title bar */
.titlebar {
  display: flex;
  align-items: center;
  height: 23px;
  background: #000;
}

.grip {
  width: 3px;
  height: 13px;
  margin: 0 10px 0 6px;
  border: 1px solid #444;
}

.quick {
  margin-right: 8px;
}

.quick-more {
  margin-left: -1px;
}

.title {
  margin-left: -4px;
}

.controls {
  display: flex;
  margin-left: auto;
  padding-right: 2px;
}

.controls button {
  display: flex;
  justify-content: center;
  width: 46px;
}

/* tabs */
.tabs {
  display: flex;
  height: 23px;
  background: #000;
}

.tab {
  width: 58px;
  text-align: center;
}

.tab-file {
  width: 56px;
  background: #b10e1e;
}

.tab-active {
  background: #202020;
  border: 1px solid #2f2f2f;
  border-bottom: 0;
}

.tab-view {
  width: 54px;
}

.tab-tools {
  display: flex;
  align-items: center;
  gap: 8px;
  margin-left: auto;
  padding-right: 3px;
}

.help {
  width: 16px;
  height: 16px;
  border-radius: 50%;
  background: #0a6cce;
  font-weight: bold;
}

/* ribbon */
.ribbon {
  display: flex;
  height: 93px;
  padding-top: 2px;
  background: #202020;
  border-top: 1px solid #2f2f2f;
  border-bottom: 1px solid #2f2f2f;
}

.group {
  height: 86px;
  border-right: 1px solid #3a3a3a;
}

.g-clipboard {
  width: 263px;
  padding-left: 2px;
}

.g-organize {
  width: 191px;
}

.g-new {
  width: 145px;
}

.g-open {
  width: 133px;
}

.g-select {
  width: 115px;
  padding-left: 6px;
}

.group-body {
  display: flex;
  height: 72px;
}

.group-name {
  padding-right: 4px;
  color: #b5b5b5;
  text-align: center;
}

.big {
  display: flex;
  flex-direction: column;
  align-items: center;
  padding-top: 6px;
  line-height: 13px;
  white-space: nowrap;
}

.big span {
  margin-top: 5px;
}

.w34 { width: 34px; }
.w36 { width: 36px; }
.w42 { width: 42px; }
.w46 { width: 46px; }
.w48 { width: 48px; }
.w50 { width: 50px; }
.w64 { width: 64px; }
.w74 { width: 74px; }

.big:disabled,
.small:disabled {
  color: #b5b5b5;
}

.tri {
  display: inline-block;
  width: 5px;
  height: 3px;
  margin-left: 1px;
  vertical-align: middle;
}

.big:disabled .tri,
.small:disabled .tri {
  color: #666;
}

.inner-line {
  width: 1px;
  height: 55px;
  margin: 7px 0 0 8px;
  background: #4a4a4a;
}

.stack {
  display: flex;
  flex-direction: column;
  padding: 2px 0 0 1px;
}

.small {
  display: flex;
  align-items: center;
  gap: 3px;
  height: 22px;
  white-space: nowrap;
}

/* address bar */
.addressbar {
  display: flex;
  align-items: center;
  height: 42px;
  padding: 0 12px 2px;
}

.nav-btn {
  width: 14px;
  margin-right: 16px;
}

.nav-small {
  width: 8px;
  margin: 0 10px 0 -4px;
}

.nav-small + .nav-up {
  margin-right: 6px;
}

.path {
  flex: 1;
  display: flex;
  align-items: center;
  height: 30px;
  padding-left: 2px;
  border: 1px solid #535353;
}

.path-icon {
  margin-right: -2px;
}

.chev {
  width: 8px;
  height: 8px;
  margin: 0 8px 0 7px;
}

.path-drop {
  display: flex;
  justify-content: center;
  width: 28px;
  margin-left: auto;
}

.path-refresh {
  display: flex;
  align-items: center;
  justify-content: center;
  width: 30px;
  height: 28px;
  border-left: 1px solid #141414;
}

.search {
  display: flex;
  align-items: center;
  gap: 13px;
  width: 202px;
  height: 30px;
  margin-left: 12px;
  padding-left: 13px;
  border: 1px solid #535353;
}

.search input {
  width: 150px;
  padding: 0;
  border: 0;
  background: none;
  color: #fff;
  font: inherit;
}

.search input::placeholder {
  color: #7c7c7c;
}

/* content */
.content {
  flex: 1;
  min-height: 0;
  display: flex;
}

.sidebar {
  width: 163px;
  padding-top: 8px;
  overflow: hidden;
}

.tree {
  margin: 0 0 8px;
  padding: 0;
  list-style: none;
}

.tree li {
  display: flex;
  align-items: center;
  gap: 5px;
  height: 24px;
  padding: 0 3px 0 24px;
  white-space: nowrap;
}

.tree .l2 {
  padding-left: 32px;
}

.tree .l3 {
  padding-left: 40px;
}

.tree .selected {
  margin: 0 1px;
  padding-left: 39px;
  background: #333;
}

.pin {
  width: 10px;
  height: 10px;
  margin-left: auto;
}

.scroll {
  display: flex;
  flex-direction: column;
  align-items: center;
  width: 17px;
  padding: 4px 1px;
  background: #171717;
}

.thumb {
  width: 15px;
  margin-top: 3px;
  background: #4d4d4d;
}

.thumb-tree {
  height: 265px;
}

.thumb-files {
  height: 248px;
}

.scroll-end {
  margin-top: auto;
}

.files {
  flex: 1;
  display: flex;
  align-items: flex-start;
  padding-left: 15px;
  margin-left: 1px;
  overflow: hidden;
  background: #202020;
  border-left: 2px solid #2a2a2a;
}

table {
  flex: none;
  width: 602px;
  table-layout: fixed;
  border-spacing: 0;
}

th {
  position: relative;
  height: 25px;
  padding: 0 6px;
  border-right: 1px solid #636363;
  color: #dedede;
  font-weight: normal;
  text-align: left;
}

.c-name {
  width: 258px;
  padding-left: 3px;
}

.c-date {
  width: 144px;
}

.c-type {
  width: 120px;
}

.sort {
  position: absolute;
  top: 0;
  left: 123px;
}

tbody::before {
  content: "";
  display: block;
  height: 6px;
}

td {
  height: 21px;
  padding: 0 6px;
  color: #dedede;
  white-space: nowrap;
}

td:first-child {
  color: #fff;
}

td .i-file {
  display: inline-block;
  margin-right: 6px;
  vertical-align: top;
}

td:last-child {
  padding-right: 4px;
  border-right: 4px solid transparent;
  background-clip: padding-box;
  text-align: right;
}

.hover td {
  background-color: #4d4d4d;
}

.note {
  margin: 50px 0 0 10px;
  fill: none;
  stroke: #ed1c24;
  stroke-width: 3;
  stroke-linecap: round;
  stroke-linejoin: round;
}

.note .dot {
  stroke-width: 5;
}

.note .eye {
  stroke-width: 4;
}

/* status bar */
.statusbar {
  display: flex;
  align-items: center;
  height: 23px;
  padding: 0 4px 0 14px;
  background: #333;
  color: #dedede;
}

.status-line {
  width: 1px;
  height: 11px;
  margin-left: 10px;
  background: #fff;
}

.view-btn {
  display: flex;
  align-items: center;
  justify-content: center;
  width: 22px;
  height: 23px;
}

.view-on {
  margin-left: auto;
  background: #666;
  border: 1px solid #8a8a8a;
}

/* taskbar */
.taskbar {
  display: flex;
  align-items: center;
  height: 30px;
  background: linear-gradient(90deg, #1d1b1b, #241b1b 45%, #2a1e1e 55%, #251e1e 70%, #1d1b1b);
}

.start {
  margin-left: 10px;
}

.find {
  margin-left: 20px;
}

.apps {
  display: flex;
  margin: 0 auto 0 872px;
}

.app {
  display: flex;
  align-items: center;
  justify-content: center;
  width: 28px;
  height: 30px;
  margin-right: 9px;
  border-bottom: 2px solid #ff9a9a;
}

.app-current {
  width: 36px;
  margin-right: 5px;
  background: #544a49;
}

.app-multi {
  border-image: linear-gradient(90deg, #ff9a9a 70%, #c26d70 70%) 1;
}

.app-green {
  background: linear-gradient(90deg, #3d6a33 70%, #393535 70%);
  border-bottom-color: #4ee03a;
}

.ps {
  width: 16px;
  height: 15px;
  border: 1px solid #86c5f4;
  background: #08084e;
  color: #86c5f4;
  font-size: 9px;
  font-weight: bold;
  line-height: 12px;
}

.tray {
  display: flex;
  align-items: center;
  gap: 11px;
}

.tray time {
  margin: 0 10px 0 2px;
}

.show-desktop {
  width: 5px;
  height: 30px;
  margin-left: 9px;
  border-left: 1px solid #777;
}
```
